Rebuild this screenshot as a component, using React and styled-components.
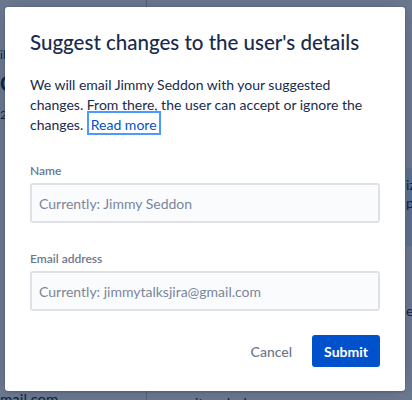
import React from "react";
import styled, { createGlobalStyle } from "styled-components";

const GlobalStyle = createGlobalStyle`
  html, body {
    margin: 0;
    padding: 0;
  }
  body {
    font-family: "Segoe UI", Lato, "Noto Sans", "DejaVu Sans", sans-serif;
    -webkit-font-smoothing: antialiased;
  }
`;

// Page behind the modal, mostly hidden by it
const Screen = styled.div`
  position: relative;
  width: 412px;
  height: 400px;
  overflow: hidden;
  background: #ffffff;
`;

const BackPage = styled.div`
  display: flex;
  height: 100%;
`;

const BackSide = styled.div`
  width: 146px;
  flex-shrink: 0;
  border-right: 1px solid #c1c7d0;
  display: flex;
  flex-direction: column;
  padding-top: 44px;
  color: #172b4d;
  font-size: 14px;
`;

const BackLine = styled.div`
  height: ${(p) => p.h}px;
  font-size: ${(p) => p.size || 14}px;
  font-weight: ${(p) => (p.bold ? 700 : 400)};
  line-height: ${(p) => p.h}px;
  white-space: nowrap;
`;

const BackFoot = styled.div`
  margin-top: auto;
  margin-bottom: -9px;
  line-height: 20px;
  font-size: 15px;
  white-space: nowrap;
`;

const BackMain = styled.div`
  flex: 1;
  display: flex;
  flex-direction: column;
  padding-top: 168px;
  color: #172b4d;
  font-size: 14px;
`;

const BackPanel = styled.div`
  margin-left: 259px;
  height: 70px;
  background: #deebff;
  padding-top: 8px;
  line-height: 18px;
  white-space: nowrap;
`;

const BackText = styled.div`
  margin-left: ${(p) => p.left}px;
  margin-top: ${(p) => p.top}px;
  white-space: nowrap;
  line-height: 18px;
`;

const BackBottom = styled.div`
  margin-top: auto;
  margin-bottom: -12px;
  margin-left: 48px;
  line-height: 18px;
  white-space: nowrap;
`;

// Overlay
const Blanket = styled.div`
  position: absolute;
  inset: 0;
  background: rgba(9, 30, 66, 0.6);
`;

const Modal = styled.div`
  position: absolute;
  top: 7px;
  left: 5px;
  width: 400px;
  box-sizing: border-box;
  padding: 23px 25px 24px;
  background: #ffffff;
  border-radius: 3px;
  box-shadow: 0 0 0 1px rgba(9, 30, 66, 0.08), 0 2px 1px rgba(9, 30, 66, 0.08),
    0 0 20px -6px rgba(9, 30, 66, 0.31);
  color: #172b4d;
`;

const Title = styled.h1`
  margin: 0;
  font-size: 20.5px;
  line-height: 24px;
  font-weight: 500;
  color: #172b4d;
  white-space: nowrap;
`;

const Body = styled.p`
  margin: 21px 0 0;
  font-size: 14px;
  line-height: 20px;
  color: #172b4d;
`;

const FocusLink = styled.a`
  color: #0052cc;
  text-decoration: none;
  padding: 3px 2px 0;
  border: 2px solid #4c9aff;
`;

const Field = styled.div`
  margin-top: 28px;
  display: flex;
  flex-direction: column;
  gap: 4px;
`;

const Label = styled.label`
  font-size: 12px;
  line-height: 16px;
  font-weight: 600;
  color: #6b778c;
`;

const Input = styled.input`
  box-sizing: border-box;
  width: 100%;
  height: 40px;
  padding: 0 7px;
  border: 2px solid #dfe1e6;
  border-radius: 3px;
  background: #fafbfc;
  font-family: inherit;
  font-size: 14px;
  color: #172b4d;
  outline: none;

  &::placeholder {
    color: #7a869a;
  }
`;

const Footer = styled.div`
  margin-top: 24px;
  display: flex;
  justify-content: flex-end;
  gap: 8px;
`;

const Button = styled.button`
  height: 32px;
  padding: 0 12px;
  border: none;
  border-radius: 3px;
  font-family: inherit;
  font-size: 14px;
  font-weight: ${(p) => (p.primary ? 700 : 500)};
  background: ${(p) => (p.primary ? "#0052cc" : "transparent")};
  color: ${(p) => (p.primary ? "#ffffff" : "#6b778c")};
  cursor: pointer;
`;

export default function App() {
  return (
    <>
      <GlobalStyle />
      <Screen>
        <BackPage>
          <BackSide>
            <BackLine h={22} size={12}>il</BackLine>
            <BackLine h={34} size={20} bold>C</BackLine>
            <BackLine h={30} size={12}>2</BackLine>
            <BackFoot>mail.com</BackFoot>
          </BackSide>
          <BackMain>
            <BackPanel>
              iz
              <br />
              pr
            </BackPanel>
            <BackText left={259} top={56}>er</BackText>
            <BackBottom>itemdesk</BackBottom>
          </BackMain>
        </BackPage>
        <Blanket />
        <Modal role="dialog">
          <Title>Suggest changes to the user's details</Title>
          <Body>
            We will email Jimmy Seddon with your suggested
            <br />
            changes. From there, the user can accept or ignore the
            <br />
            changes. <FocusLink href="#">Read more</FocusLink>
          </Body>
          <Field>
            <Label>Name</Label>
            <Input placeholder="Currently: Jimmy Seddon" />
          </Field>
          <Field>
            <Label>Email address</Label>
            <Input placeholder="Currently: jimmytalksjira@gmail.com" />
          </Field>
          <Footer>
            <Button>Cancel</Button>
            <Button primary>Submit</Button>
          </Footer>
        </Modal>
      </Screen>
    </>
  );
}
